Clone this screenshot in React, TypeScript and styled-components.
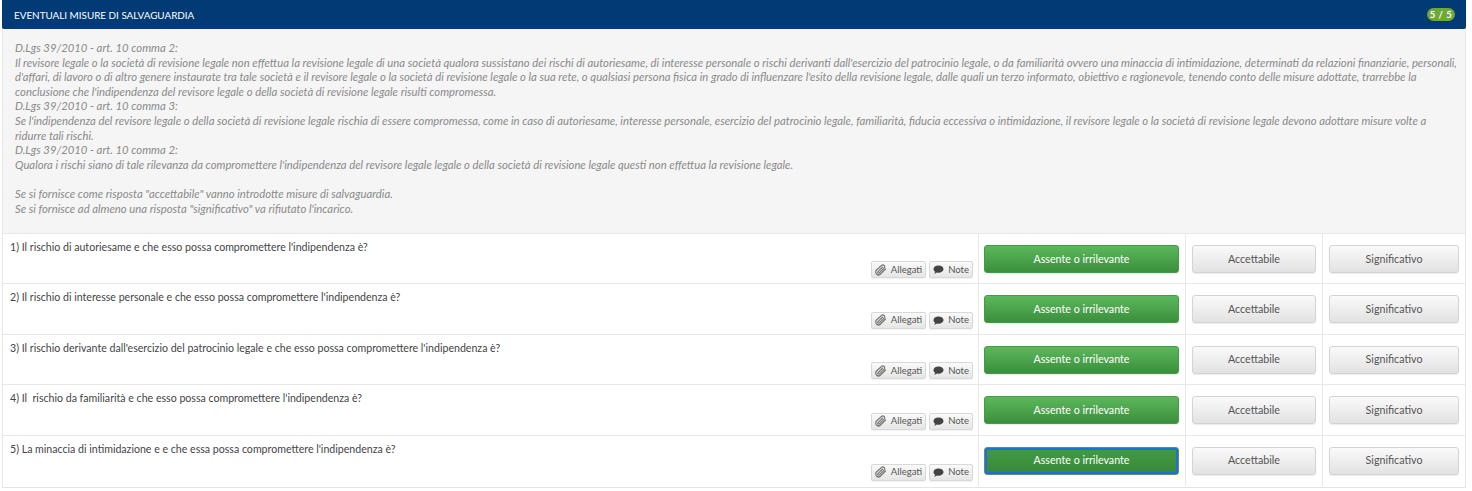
import React from "react";
import styled, {createGlobalStyle} from "styled-components";

const QUESTIONS = [
	"1) Il rischio di autoriesame e che esso possa compromettere l'indipendenza è?",
	"2) Il rischio di interesse personale e che esso possa compromettere l'indipendenza è?",
	"3) Il rischio derivante dall'esercizio del patrocinio legale e che esso possa compromettere l'indipendenza è?",
	"4) Il  rischio da familiarità e che esso possa compromettere l'indipendenza è?",
	"5) La minaccia di intimidazione e e che essa possa compromettere l'indipendenza è?",
];

const NOTE_LINES = [
	"D.Lgs 39/2010 - art. 10 comma 2:",
	"Il revisore legale o la società di revisione legale non effettua la revisione legale di una società qualora sussistano dei rischi di autoriesame, di interesse personale o rischi derivanti dall'esercizio del patrocinio legale, o da familiarità ovvero una minaccia di intimidazione, determinati da relazioni finanziarie, personali,",
	"d'affari, di lavoro o di altro genere instaurate tra tale società e il revisore legale o la società di revisione legale o la sua rete, o qualsiasi persona fisica in grado di influenzare l'esito della revisione legale, dalle quali un terzo informato, obiettivo e ragionevole, tenendo conto delle misure adottate, trarrebbe la",
	"conclusione che l'indipendenza del revisore legale o della società di revisione legale risulti compromessa.",
	"D.Lgs 39/2010 - art. 10 comma 3:",
	"Se l'indipendenza del revisore legale o della società di revisione legale rischia di essere compromessa, come in caso di autoriesame, interesse personale, esercizio del patrocinio legale, familiarità, fiducia eccessiva o intimidazione, il revisore legale o la società di revisione legale devono adottare misure volte a",
	"ridurre tali rischi.",
	"D.Lgs 39/2010 - art. 10 comma 2:",
	"Qualora i rischi siano di tale rilevanza da compromettere l'indipendenza del revisore legale legale o della società di revisione legale questi non effettua la revisione legale.",
	"",
	"Se si fornisce come risposta \"accettabile\" vanno introdotte misure di salvaguardia.",
	"Se si fornisce ad almeno una risposta \"significativo\" va rifiutato l'incarico.",
];

const PaperclipIcon = () => (
	<svg width="12" height="12" viewBox="0 0 24 24" fill="none" stroke="#777" strokeWidth="2.4" strokeLinecap="round">
		<path d="M21 10 11 20a5.5 5.5 0 0 1-8-8L13 3a3.7 3.7 0 0 1 5.3 5.2L8.6 17.8a1.8 1.8 0 0 1-2.6-2.6L15 6.5"/>
	</svg>
);

const CommentIcon = () => (
	<svg width="11" height="11" viewBox="0 0 24 24" fill="#444">
		<path d="M12 3C5.6 3 1 6.6 1 11c0 2.4 1.4 4.500 3.600 6-.2 1.500-1 2.800-2.100 4 2.400-.2 4.600-1.100 6.200-2.400 1 .2 2.100.4 3.300.4 6.400 0 11-3.600 11-8s-4.600-8-11-8z"/>
	</svg>
);

function App() {
	return <Panel>
		<GlobalStyle/>
		<Header>
			<Title>EVENTUALI MISURE DI SALVAGUARDIA</Title>
			<Badge>5 / 5</Badge>
		</Header>
		<NoteBox>
			{NOTE_LINES.map((line, i) => line ? <div key={i}>{line}</div> : <br key={i}/>)}
		</NoteBox>
		{QUESTIONS.map((question, i) => (
			<Row key={i}>
				<QuestionCell>
					<div>{question}</div>
					<SmallButtons>
						<SmallButton><PaperclipIcon/>Allegati</SmallButton>
						<SmallButton><CommentIcon/>Note</SmallButton>
					</SmallButtons>
				</QuestionCell>
				<AnswerCell $first><AnswerButton $selected $focused={i === 4}>Assente o irrilevante</AnswerButton></AnswerCell>
				<AnswerCell><AnswerButton>Accettabile</AnswerButton></AnswerCell>
				<AnswerCell><AnswerButton>Significativo</AnswerButton></AnswerCell>
			</Row>
		))}
	</Panel>
}

const GlobalStyle = createGlobalStyle`
  html, body {
    margin: 0;
    background: #fff;
  }
  body {
    font-family: Lato, "Open Sans", sans-serif;
    font-size: 11px;
    color: #333;
  }
`

const Panel = styled.div`
  width: 1464px;
  margin-left: 2px;
  border-bottom: 1px solid #e4e4e4;
  border-right: 1px solid #e8e8e8;
  border-left: 1px solid #e8e8e8;
  box-sizing: border-box;
  height: 488px;
`

const Header = styled.div`
  height: 29px;
  margin: 0 -1px;
  background: #023a75;
  border-radius: 0 0 2px 2px;
  color: #fff;
  display: flex;
  align-items: center;
  justify-content: space-between;
  padding: 0 11px 0 12px;
`

const Title = styled.div`
  font-size: 9.900px;
`

const Badge = styled.div`
  background: #6fa83a;
  border-radius: 7px;
  width: 28px;
  height: 13px;
  line-height: 13px;
  text-align: center;
  font-size: 9.500px;
  font-weight: 700;
  letter-spacing: 0.5px;
`

const NoteBox = styled.div`
  height: 205px;
  box-sizing: border-box;
  background: #f5f5f5;
  border-bottom: 1px solid #e8e8e8;
  padding: 12px 12px 0;
  font-style: italic;
  font-size: 11.300px;
  line-height: 14.600px;
  color: #8a8a8a;
  white-space: nowrap;
`

const Row = styled.div`
  display: grid;
  grid-template-columns: 976px 207px 137px 1fr;
  height: 50.400px;
  box-sizing: border-box;
  border-bottom: 1px solid #e8e8e8;
  &:last-child {
    border-bottom: none;
  }
`

const QuestionCell = styled.div`
  position: relative;
  padding: 6px 7px;
  font-size: 10.600px;
  line-height: 14px;
  color: #444;
  white-space: pre-wrap;
  border-right: 1px solid #e8e8e8;
`

const SmallButtons = styled.div`
  position: absolute;
  right: 5px;
  bottom: 5px;
  display: flex;
  gap: 3px;
`

const SmallButton = styled.button`
  display: flex;
  align-items: center;
  gap: 4px;
  height: 17px;
  padding: 0 3px;
  font: inherit;
  font-size: 9.500px;
  color: #555;
  border: 1px solid #d8d8d8;
  border-radius: 2px;
  background: linear-gradient(#fafafa, #e6e6e6);
  box-shadow: 0 1px 1px rgba(0, 0, 0, 0.06);
`

const AnswerCell = styled.div<{$first?: boolean}>`
  display: flex;
  padding: 11px 6px 10px ${p => p.$first ? "5px" : "6px"};
  border-right: 1px solid #e8e8e8;
  &:last-child {
    border-right: none;
  }
`

const AnswerButton = styled.button<{$selected?: boolean; $focused?: boolean}>`
  flex: 1;
  height: 28px;
  padding: 0 0 2px;
  font: inherit;
  font-size: 10.700px;
  border-radius: 3px;
  color: ${p => p.$selected ? "#fff" : "#555"};
  border: 1px solid ${p => p.$selected ? "#459a45" : "#d4d4d4"};
  background: ${p => p.$selected ? "linear-gradient(#5cb85c, #3b8f3b)" : "linear-gradient(#fafafa, #e2e2e2)"};
  box-shadow: 0 1px 1px rgba(0, 0, 0, 0.08);
  ${p => p.$focused ? "background: linear-gradient(#419b41, #39893b); box-shadow: inset 0 0 0 2px #1b6fe0; border-color: #6a8a6a;" : ""}
`

export default App
